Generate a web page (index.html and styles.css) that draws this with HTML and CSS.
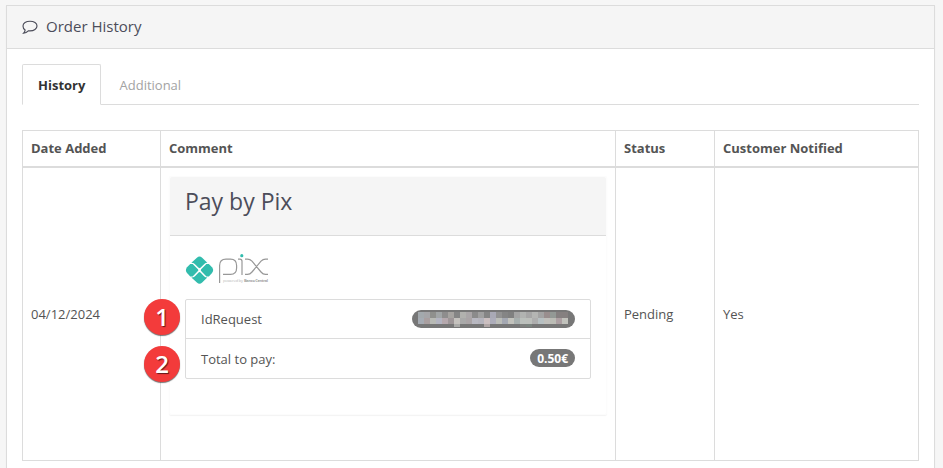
FILE: index.html
```html
<!DOCTYPE html>
<html lang="en">
<head>
<meta charset="utf-8">
<title>Order History</title>
<link rel="stylesheet" href="styles.css">
</head>
<body>
<section class="panel">
  <header class="panel-heading">
    <svg class="bubble" width="16" height="15" viewBox="0 0 16 15"><path d="M8 1.2c4 0 7 2.1 7 4.8s-3 4.9-7 4.9c-.6 0-1.200 0-1.700-.1C5.200 12 3.300 13.100 1.500 13.300c.9-.9 1.500-1.900 1.600-3.200C1.700 9.200 1 7.700 1 6c0-2.700 3-4.800 7-4.800z"/></svg>
    <h3>Order History</h3>
  </header>
  <div class="panel-body">
    <nav class="tabs"><a class="tab active">History</a><a class="tab">Additional</a></nav>
    <table class="history">
      <colgroup><col class="c-date"><col class="c-comment"><col class="c-status"><col class="c-notified"></colgroup>
      <thead><tr><th>Date Added</th><th>Comment</th><th>Status</th><th>Customer Notified</th></tr></thead>
      <tbody><tr>
        <td>04/12/2024</td>
        <td class="comment">
          <div class="card">
            <h2 class="card-heading">Pay by Pix</h2>
            <div class="card-body">
              <svg class="logo" width="84" height="32" viewBox="0 0 84 32">
                <g fill="#32bcad"><g transform="translate(.9 1.200) scale(.94)"><path d="M5.800 9.200 11.700 3.800Q14.500 1.200 17.300 3.800L22.800 9.200Q20.800 9.200 19.600 10.400L15.500 14.500Q14.500 15.400 13.500 14.500L9.400 10.400Q8 9.200 5.800 9.200z"/><path d="M5.800 24.800 11.700 30.200Q14.500 32.800 17.300 30.200L22.800 24.800Q20.800 24.800 19.600 23.600L15.500 19.500Q14.500 18.600 13.500 19.500L9.400 23.600Q8 24.800 5.800 24.800z"/><path d="M4.600 10.400H7.200L12.800 16Q13.600 17 12.800 18L7.200 23.600H4.600L1.200 20Q-1.200 17 1.200 14z"/><path d="M24.400 10.400H21.800L16.200 16Q15.400 17 16.200 18L21.800 23.600H24.400L27.800 20Q30.200 17 27.800 14z"/></g><circle cx="56.800" cy="2.700" r="1.600"/></g>
                <g fill="none" stroke="#989898" stroke-width="1.200"><path d="M34.600 30V12.500Q34.600 6.100 41 6.100H45.500Q51.600 6.100 51.600 12.500V15Q51.600 21.400 45.500 21.400H38M53 6.100H55Q57 6.100 57 8.200V22M60 6.100H62.500Q65 6.100 67 8.200L76 19Q78 21.400 80.500 21.400H83M60 21.400H62.500Q65 21.400 67 19L76 8.200Q78 6.100 80.500 6.100H83"/></g>
                <text class="tag" x="38" y="29.400" textLength="20">powered by</text><text class="tag bold" x="59" y="29.400" textLength="24">Banco Central</text>
              </svg>
              <ul class="list">
                <li>IdRequest<span class="badge hidden-id"><svg id="mosaic" width="150" height="15" viewBox="0 0 150 15"></svg></span><b class="marker">1</b></li>
                <li>Total to pay:<span class="badge">0.50€</span><b class="marker">2</b></li>
              </ul>
            </div>
          </div>
        </td>
        <td>Pending</td><td>Yes</td>
      </tr></tbody>
    </table>
  </div>
</section>
<script src="mosaic.js"></script>
</body>
</html>
```
FILE: styles.css
```css
* { box-sizing: border-box; }
html, body { height: 468px; overflow: hidden; }
body { margin: 0; padding: 5px 8px 0 6px; background: #f6f6f6; color: #545454; font: 13px/18px "Open Sans", sans-serif; }
h2, h3, ul { margin: 0; padding: 0; font-weight: 400; }
.panel { height: 480px; border: 1px solid #dcdcdc; background: #fff; box-shadow: 0 1px 1px rgba(0,0,0,.05); }
.panel-heading { display: flex; align-items: center; height: 43px; padding: 0 15px 2px; border-bottom: 1px solid #dcdcdc; background: #f5f5f5; color: #4c4d5a; }
.panel-heading h3 { margin-left: 8px; font-size: 15px; line-height: 18px; }
.bubble { fill: none; stroke: #4c4d5a; stroke-width: 1.15; margin-top: 3px; }
.panel-body { padding: 15px; }
.tabs { display: flex; height: 41px; margin-bottom: 25px; border-bottom: 1px solid #dcdcdc; }
.tab { height: 41px; padding: 11px 15px 0; border: 1px solid transparent; color: #a3a3a3; }
.tab.active { width: 79px; margin-right: 2.5px; border-color: #dcdcdc; border-bottom-color: #fff; border-radius: 2px 2px 0 0; background: #fff; color: #333; font-weight: 700; }
.history { width: 897px; table-layout: fixed; border-collapse: separate; border-spacing: 0; border-top: 1px solid #dcdcdc; border-right: 1px solid #dcdcdc; }
.c-date { width: 138px; }
.c-comment { width: 455px; }
.c-status { width: 99px; }
.c-notified { width: 204px; }
th, td { padding: 0 8px; border-left: 1px solid #dcdcdc; text-align: left; vertical-align: middle; }
th { height: 37px; padding-bottom: 2px; border-bottom: 2px solid #dcdcdc; font-weight: 700; }
td { height: 293px; border-bottom: 1px solid #dcdcdc; }
td.comment { padding-top: 8px; vertical-align: top; }
.card { height: 239px; border: 1px solid #fcfcfc; border-radius: 2px; box-shadow: 0 1px 1px rgba(0,0,0,.05); }
.card-heading { height: 59px; padding: 8px 15px; border-bottom: 1px solid #dcdcdc; background: #f5f5f5; border-radius: 2px 2px 0 0; color: #4c4d5a; font-size: 23px; line-height: 33px; }
.card-body { padding: 17px 15px; }
.logo { display: block; margin-bottom: 14px; }
.tag { fill: #b8b8b8; font-size: 4px; }
.tag.bold { fill: #a0a0a0; font-weight: 700; }
.list { height: 80px; border: 1px solid #dcdcdc; border-radius: 2px; list-style: none; }
.list li { position: relative; display: flex; align-items: center; justify-content: space-between; height: 38px; padding: 0 15px; }
.list li + li { height: 40px; border-top: 1px solid #dcdcdc; }
.badge { height: 18px; padding: 0 7px; border-radius: 9px; background: #777; color: #fff; font-size: 12px; font-weight: 700; line-height: 19px; }
.list li + li .badge { margin-top: -2px; }
.hidden-id { width: 163px; padding: 2px 6px; }
.hidden-id svg { display: block; }
.marker { position: absolute; left: -42px; top: -1px; width: 36px; height: 36px; border-radius: 50%; background: #f33b3b; box-shadow: 0 1px 1px rgba(0,0,0,.55); color: #fff; font: 600 24px/35px "Open Sans", sans-serif; text-align: center; text-shadow: 1px 1px 1px rgba(0,0,0,.6); }
.list li + li .marker { top: 7px; }
```
FILE: mosaic.js
```js
const rows = [
  ["#a3a9ad","#a5a5a8","#8f908d","#a1a5a6","#8e8d8d","#a6a3a0","#858585","#b1b1ae","#aaa6a8","#8b8b8b","#a0a0a0","#858585","#a9a9b5","#929292","#858585","#808080","#a4a4a4","#b1b3b1","#a6a6a6","#b4b5b3","#a3a3a3","#998e8e","#939995","#858080","#858080"],
  ["#a5abb3","#a99fa0","#b8bab5","#b3b4c1","#b5a8ad","#9e9698","#c5c2be","#a9a9a9","#aaa4a6","#b8b8c1","#b5b4bd","#cbbfc0","#adadba","#bbbdb8","#a4a8b2","#c2c2bc","#a7afae","#bbc0bc","#bcbfbb","#aeaeae","#b7c0c2","#c0bfbb","#bbbcb5","#ac9fa2","#c1c2bc"],
  ["#777","#777","#777","#777","#777","#777","#aaaaa8","#777","#777","#777","#777","#b0a6a6","#777","#777","#777","#777","#777","#7e807e","#7b847f","#777","#777","#777","#777","#777","#777"]
];
const svg = document.getElementById("mosaic");
rows.forEach((row, y) => row.forEach((color, x) => {
  const r = document.createElementNS("http://www.w3.org/2000/svg", "rect");
  r.setAttribute("x", x * 6); r.setAttribute("y", y * 6);
  r.setAttribute("width", 6); r.setAttribute("height", 6);
  r.setAttribute("fill", color);
  svg.append(r);
}));
```
